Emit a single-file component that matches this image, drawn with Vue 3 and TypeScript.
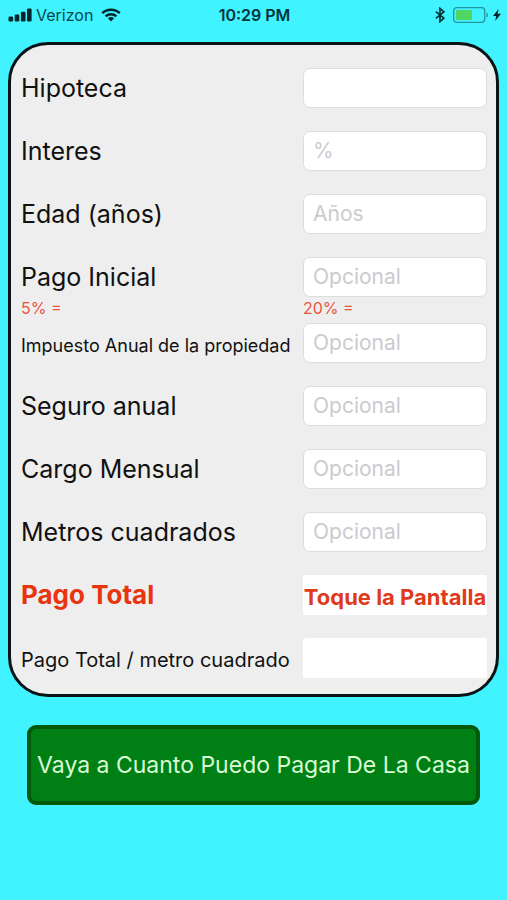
<script setup lang="ts">
import { ref, computed } from 'vue'

interface Field {
  id: string
  label: string
  placeholder: string
  small?: boolean
  hints?: boolean
}

const fields: Field[] = [
  { id: 'hipoteca', label: 'Hipoteca', placeholder: '' },
  { id: 'interes', label: 'Interes', placeholder: '%' },
  { id: 'edad', label: 'Edad (años)', placeholder: 'Años' },
  { id: 'inicial', label: 'Pago Inicial', placeholder: 'Opcional', hints: true },
  { id: 'impuesto', label: 'Impuesto Anual de la propiedad', placeholder: 'Opcional', small: true },
  { id: 'seguro', label: 'Seguro anual', placeholder: 'Opcional' },
  { id: 'cargo', label: 'Cargo Mensual', placeholder: 'Opcional' },
  { id: 'metros', label: 'Metros cuadrados', placeholder: 'Opcional' },
]

const values = ref<Record<string, string>>({})

const amount = (id: string): number => Number(values.value[id]) || 0

const share = (rate: number): string => {
  const base = amount('hipoteca')
  return base ? (base * rate).toFixed(0) : ''
}

const total = computed<number>(() => {
  const principal = amount('hipoteca') - amount('inicial')
  const months = amount('edad') * 12
  if (principal <= 0 || months <= 0) return 0
  const rate = amount('interes') / 1200
  const loan = rate ? (principal * rate) / (1 - Math.pow(1 + rate, -months)) : principal / months
  return loan + (amount('impuesto') + amount('seguro')) / 12 + amount('cargo')
})

const totalText = ref('Toque la Pantalla')
const perMeterText = ref('')

function calculate(): void {
  if (!total.value) return
  totalText.value = total.value.toFixed(2)
  const meters = amount('metros')
  perMeterText.value = meters ? (total.value / meters).toFixed(2) : ''
}
</script>

<template>
  <div class="screen" @click="calculate">
    <header class="status">
      <div class="status-side">
        <svg class="signal" viewBox="0 0 24 14" width="24" height="14" aria-hidden="true">
          <rect x="0.5" y="8.6" width="4.6" height="4.8" rx="1.2" />
          <rect x="6.7" y="6.6" width="4.6" height="6.8" rx="1.2" />
          <rect x="12.9" y="3.8" width="4.6" height="9.6" rx="1.2" />
          <rect x="19" y="0.4" width="4.6" height="13" rx="1.2" />
        </svg>
        <span class="carrier">Verizon</span>
        <svg class="wifi" viewBox="0 0 20 14" width="20" height="14" aria-hidden="true">
          <path d="M1.2 5.2C6 0.6 14 0.6 18.8 5.2" />
          <path d="M4.6 8.4C7.7 5.6 12.3 5.6 15.4 8.4" />
          <path class="solid" d="M6.9 10.3C8.6 8.7 11.4 8.7 13.1 10.3L10 13.6Z" />
        </svg>
      </div>
      <span class="time">10:29 PM</span>
      <div class="status-side end">
        <svg class="bluetooth" viewBox="0 0 10 16" width="10" height="16" aria-hidden="true">
          <path d="M0.9 4.6L8.8 11.2L5 14.6V1.4L8.8 4.8L0.9 11.4" />
        </svg>
        <svg viewBox="0 0 36 16" width="36" height="16" aria-hidden="true">
          <rect class="shell" x="0.7" y="0.7" width="31" height="14.6" rx="3" />
          <rect class="charge" x="3" y="3" width="16" height="10" rx="1" />
          <path class="tip" d="M33.4 5.4C35.4 6 35.4 10 33.4 10.6Z" />
        </svg>
        <svg class="bolt" viewBox="0 0 8 12" width="8" height="12" aria-hidden="true">
          <path d="M5.6 0L0 6.9H3.2L2.2 12L8 4.8H4.6Z" />
        </svg>
      </div>
    </header>

    <main>
      <form class="card" @submit.prevent="calculate">
        <template v-for="f in fields" :key="f.id">
          <div class="row">
            <label :for="f.id" :class="{ tax: f.small }">{{ f.label }}</label>
            <input :id="f.id" v-model="values[f.id]" type="text" inputmode="decimal" :placeholder="f.placeholder" />
          </div>
          <div v-if="f.hints" class="hints">
            <span>5% = {{ share(0.05) }}</span>
            <span>20% = {{ share(0.2) }}</span>
          </div>
        </template>
        <div class="row">
          <label class="total" for="total">Pago Total</label>
          <output id="total">{{ totalText }}</output>
        </div>
        <div class="row">
          <label class="per-meter" for="per-meter">Pago Total / metro cuadrado</label>
          <output id="per-meter">{{ perMeterText }}</output>
        </div>
      </form>
      <button class="go" type="button">Vaya a Cuanto Puedo Pagar De La Casa</button>
    </main>
  </div>
</template>

<style>
body {
  background: #40f3ff;
}
</style>

<style scoped>
.screen {
  min-height: 100vh;
  background: #40f3ff;
  color: #111;
  font-family: Inter, "Liberation Sans", sans-serif;
}

.status {
  display: grid;
  grid-template-columns: 1fr auto 1fr;
  align-items: center;
  height: 30px;
  padding: 0 6px 0 8px;
  color: #0a4650;
  font-size: 16px;
}

.status-side {
  display: flex;
  align-items: center;
  gap: 4px;
}

.end {
  justify-content: flex-end;
}

.end svg:nth-child(2) {
  margin-left: 4px;
}

.signal,
.bolt {
  fill: #04262c;
}

.wifi {
  margin-left: 4px;
  fill: none;
  stroke: #04262c;
  stroke-width: 2.4;
}

.wifi .solid {
  fill: #04262c;
  stroke: none;
}

.time {
  color: #06343c;
  font-weight: 600;
}

.bluetooth {
  fill: none;
  stroke: #06343c;
  stroke-width: 1.7;
}

.shell {
  fill: none;
  stroke: #2197a1;
  stroke-width: 1.3;
}

.charge {
  fill: #4fd663;
}

.tip {
  fill: #2197a1;
}

.card {
  display: flex;
  flex-direction: column;
  gap: 23px;
  margin: 12px 8px 0;
  padding: 23px 9px 16px 10px;
  border: 3px solid #0a1416;
  border-radius: 40px;
  background: #eee;
}

.row,
.hints {
  display: grid;
  grid-template-columns: minmax(0, 1fr) 184px;
  align-items: center;
}

.row {
  height: 40px;
}

label {
  font-size: 25px;
  line-height: 30px;
  white-space: nowrap;
}

.tax,
.per-meter {
  padding-top: 6px;
  font-size: 18px;
}

.per-meter {
  padding-top: 4px;
  font-size: 20px;
}

.total {
  color: #e8350f;
  font-size: 26px;
  font-weight: 700;
}

.hints {
  height: 26px;
  margin: -23px 0;
  padding-bottom: 4px;
  box-sizing: border-box;
  color: #e9543f;
  font-size: 16px;
  line-height: 20px;
}

input {
  box-sizing: border-box;
  width: 100%;
  height: 40px;
  padding: 0 9px 2px;
  border: 1px solid #ddd;
  border-radius: 7px;
  background: #fff;
  color: #111;
  font: inherit;
  font-size: 21px;
}

input::placeholder {
  color: #cbcbcf;
  opacity: 1;
}

output {
  display: flex;
  align-items: center;
  justify-content: center;
  height: 40px;
  padding-top: 3px;
  box-sizing: border-box;
  border-radius: 2px;
  background: #fff;
  color: #de3a1b;
  font-size: 22px;
  font-weight: 700;
  white-space: nowrap;
}

.go {
  display: block;
  width: calc(100% - 54px);
  height: 80px;
  margin: 28px auto 0;
  padding: 0;
  border: 4px solid #005a0a;
  border-radius: 9px;
  background: #008014;
  color: #d8fbd4;
  font: inherit;
  font-size: 23px;
  white-space: nowrap;
}
</style>
